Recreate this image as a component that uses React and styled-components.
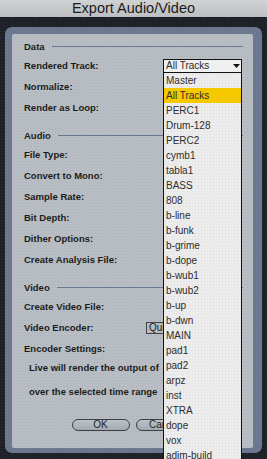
import React from "react";
import styled, { createGlobalStyle } from "styled-components";

const GlobalStyle = createGlobalStyle`
  html, body { margin: 0; padding: 0; background: #1d2026; }
  body { font-family: "Liberation Sans", Arial, sans-serif; }
  * { box-sizing: border-box; }
`;

const Window = styled.div`
  width: 267px;
  height: 459px;
  overflow: hidden;
  display: flex;
  flex-direction: column;
  background-color: #1d2026;
  background-image: radial-gradient(rgba(255, 255, 255, 0.08) 0.6px, transparent 0.9px);
  background-size: 3px 3px;
`;

const TitleBar = styled.div`
  flex: none;
  height: 17px;
  display: flex;
  align-items: center;
  justify-content: center;
  background: linear-gradient(#d0d2d4, #bcbec1);
  color: #1b1b1b;
  font-size: 14.5px;
  line-height: 17px;
`;

const Stage = styled.div`
  flex: 1;
  display: flex;
  flex-direction: column;
  padding: 10px 5px 6px 5px;
`;

const OuterPanel = styled.div`
  flex: 1;
  display: flex;
  flex-direction: column;
  background: #6c7890;
  border-radius: 7px;
  padding: 7px 9px 5px 7px;
`;

const InnerPanel = styled.div`
  flex: 1;
  display: flex;
  flex-direction: column;
  background-color: #b7bdc2;
  background-image: radial-gradient(rgba(0, 0, 0, 0.05) 0.6px, transparent 0.9px);
  background-size: 3px 3px;
  border-radius: 2px;
  padding: 3px 0 0 12px;
  color: #1c1c1c;
  font-size: 9.5px;
  font-weight: bold;
`;

const Section = styled.section`
  display: flex;
  flex-direction: column;
  & + & {
    margin-top: 8px;
  }
`;

const SectionHeader = styled.div`
  height: 18px;
  display: flex;
  align-items: center;
  gap: 7px;
  padding-right: 10px;
  &::after {
    content: "";
    flex: 1;
    height: 1px;
    background: #6a7890;
  }
`;

const Row = styled.div`
  height: 21px;
  display: grid;
  grid-template-columns: 122px 1fr;
  align-items: center;
  padding-right: 11px;
`;

const Label = styled.span`
  white-space: nowrap;
`;

const Dropdown = styled.div`
  position: relative;
  justify-self: end;
  width: 79px;
  height: 14px;
  border: 1px solid #111;
  background: #f0f0f0;
  display: flex;
  align-items: center;
  padding-left: 2px;
  font-size: 10px;
  font-weight: normal;
  color: #2a2a2a;
`;

const Arrow = styled.svg`
  position: absolute;
  right: 1px;
  top: 4px;
`;

const Menu = styled.ul`
  position: absolute;
  z-index: 2;
  top: 13px;
  left: -1px;
  width: 79px;
  margin: 0;
  padding: 0;
  list-style: none;
  border-left: 1px solid #111;
  border-right: 1px solid #111;
  background-color: #ececec;
  background-image: radial-gradient(rgba(0, 0, 0, 0.06) 0.6px, transparent 0.9px);
  background-size: 3px 3px;
`;

const MenuItem = styled.li`
  height: 15px;
  line-height: 15px;
  padding-left: 2px;
  font-size: 10px;
  font-weight: normal;
  color: #2d2d2d;
  white-space: nowrap;
  background: ${(p) => (p.$selected ? "#f5c800" : "transparent")};
`;

const FieldBox = styled.div`
  justify-self: start;
  width: 80px;
  height: 12px;
  border: 1px solid #444;
  padding-left: 2px;
  display: flex;
  align-items: center;
  font-size: 10px;
  font-weight: normal;
  color: #222;
  white-space: nowrap;
  overflow: hidden;
`;

const Para = styled.p`
  margin: -3px 0 0 0;
  padding-left: 5px;
  line-height: 24px;
  white-space: nowrap;
`;

const ButtonRow = styled.div`
  margin-top: 15px;
  display: flex;
  justify-content: center;
  gap: 6px;
  padding-right: 12px;
`;

const Button = styled.button`
  width: 58px;
  height: 12px;
  padding: 0;
  border: 1px solid #3c4045;
  border-radius: 6px;
  background: linear-gradient(#bcc3c8, #a3abb1);
  font-family: "Liberation Sans", Arial, sans-serif;
  font-size: 10px;
  line-height: 10px;
  color: #222;
`;

const tracks = [
  "Master", "All Tracks", "PERC1", "Drum-128", "PERC2", "cymb1", "tabla1",
  "BASS", "808", "b-line", "b-funk", "b-grime", "b-dope", "b-wub1", "b-wub2",
  "b-up", "b-dwn", "MAIN", "pad1", "pad2", "arpz", "inst", "XTRA", "dope",
  "vox", "adim-build",
];

export default function App() {
  return (
    <>
      <GlobalStyle />
      <Window>
        <TitleBar>Export Audio/Video</TitleBar>
        <Stage>
          <OuterPanel>
            <InnerPanel>
              <Section>
                <SectionHeader>Data</SectionHeader>
                <Row>
                  <Label>Rendered Track:</Label>
                  <Dropdown>
                    All Tracks
                    <Arrow width="7" height="4" viewBox="0 0 7 4">
                      <path d="M0 0H7L3.5 4Z" fill="#111" />
                    </Arrow>
                    <Menu>
                      {tracks.map((t) => (
                        <MenuItem key={t} $selected={t === "All Tracks"}>
                          {t}
                        </MenuItem>
                      ))}
                    </Menu>
                  </Dropdown>
                </Row>
                <Row><Label>Normalize:</Label></Row>
                <Row><Label>Render as Loop:</Label></Row>
              </Section>
              <Section>
                <SectionHeader>Audio</SectionHeader>
                <Row><Label>File Type:</Label></Row>
                <Row><Label>Convert to Mono:</Label></Row>
                <Row><Label>Sample Rate:</Label></Row>
                <Row><Label>Bit Depth:</Label></Row>
                <Row><Label>Dither Options:</Label></Row>
                <Row><Label>Create Analysis File:</Label></Row>
              </Section>
              <Section>
                <SectionHeader>Video</SectionHeader>
                <Row><Label>Create Video File:</Label></Row>
                <Row>
                  <Label>Video Encoder:</Label>
                  <FieldBox>Qui</FieldBox>
                </Row>
                <Row><Label>Encoder Settings:</Label></Row>
              </Section>
              <Para>
                Live will render the output of
                <br />
                over the selected time range
              </Para>
              <ButtonRow>
                <Button>OK</Button>
                <Button>Cancel</Button>
              </ButtonRow>
            </InnerPanel>
          </OuterPanel>
        </Stage>
      </Window>
    </>
  );
}
